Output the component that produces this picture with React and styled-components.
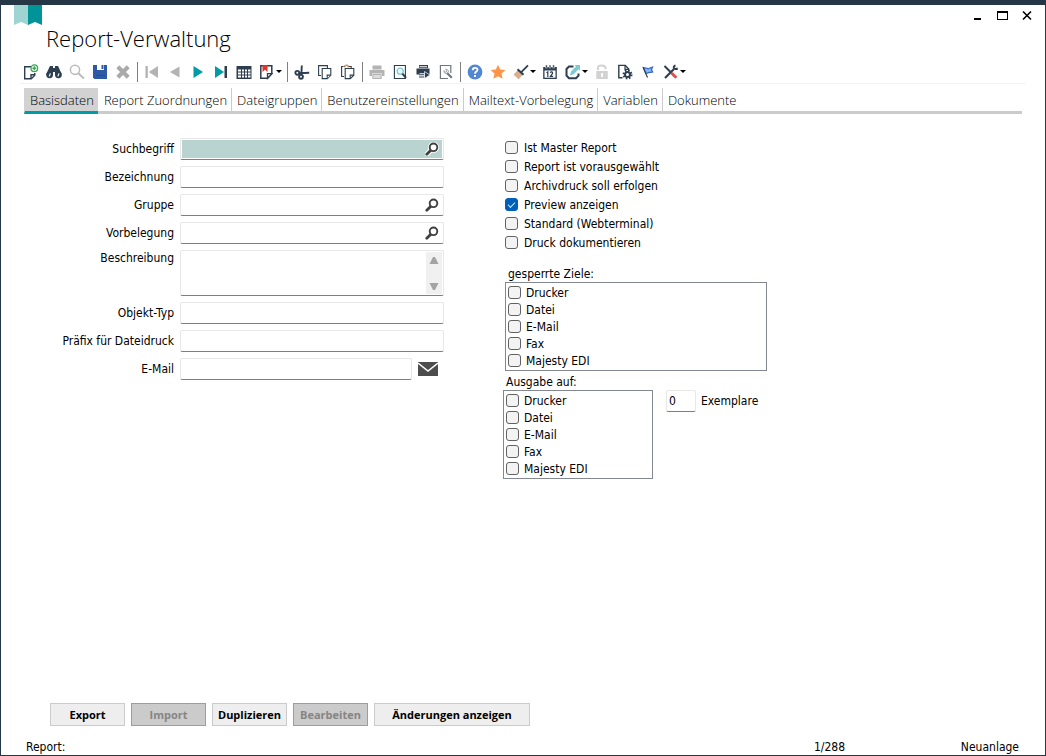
import React from 'react';
import styled, { createGlobalStyle } from 'styled-components';

const GlobalStyle = createGlobalStyle`
	* {
		box-sizing: border-box;
	}

	body {
		margin: 0;
		background: #fff;
		color: #000;
		font-family: 'DejaVu Sans Condensed', 'DejaVu Sans', sans-serif;
		font-size: 12px;
		line-height: 16px;
	}

	button,
	input,
	textarea {
		font: inherit;
		color: inherit;
	}
`;

const Window = styled.div`
	display: flex;
	flex-direction: column;
	min-height: 100vh;
	border: 1px solid #253746;
	border-top-width: 5px;
`;

const Header = styled.header`
	display: flex;
	align-items: flex-start;
	height: 54px;
	padding: 0 10px 0 13px;
`;

const Title = styled.h1`
	flex: 1;
	margin: 16px 0 0 4px;
	font-family: 'Open Sans', sans-serif;
	font-size: 22px;
	font-weight: 300;
	line-height: 34px;
`;

const WindowButtons = styled.div`
	display: flex;
	gap: 9px;
	padding-top: 3px;
`;

const IconButton = styled.button`
	display: flex;
	align-items: center;
	justify-content: center;
	width: 16px;
	height: 16px;
	padding: 0;
	border: none;
	background: none;
`;

const Toolbar = styled.div`
	display: flex;
	align-items: center;
	height: 25px;
	margin: 0 19px;
	padding-top: 2px;
	border-bottom: 1px solid #f3f3f3;
`;

const ToolButton = styled.button`
	display: flex;
	align-items: center;
	width: ${props => (props.$menu ? '29px' : '23px')};
	height: 22px;
	padding: 0 0 0 3px;
	border: none;
	background: none;
`;

const Separator = styled.span`
	width: 1px;
	height: 20px;
	margin: 0 3px 0 2px;
	background: #808080;
`;

const Tabs = styled.nav`
	display: flex;
	height: 30px;
	margin: 0 23px;
	padding-top: 4px;
	border-bottom: 3px solid #cbcbcb;
`;

const Tab = styled.a`
	height: ${props => (props.$active ? '26px' : '23px')};
	padding: 0 4px 0 5px;
	border-left: 1px solid ${props => (props.$line ? '#cbcbcb' : 'transparent')};
	border-bottom: ${props => (props.$active ? '3px solid #009ca6' : 'none')};
	background: ${props => (props.$active ? '#d2d2d2' : 'none')};
	color: #000;
	font-family: 'Open Sans', sans-serif;
	font-size: 13px;
	font-weight: 300;
	line-height: 24px;
	text-decoration: none;
	white-space: nowrap;
`;

const Content = styled.main`
	display: flex;
	flex: 1;
	align-items: flex-start;
	gap: 59px;
	padding: 24px 24px 20px 23px;
`;

const Form = styled.form`
	display: grid;
	grid-template-columns: 150px 264px;
	gap: 6px;
`;

const FieldLabel = styled.label`
	line-height: ${props => (props.$top ? '16px' : '22px')};
	text-align: right;
	white-space: nowrap;
`;

const Field = styled.div`
	display: flex;
	align-items: center;
	height: ${props => (props.$tall ? '46px' : '22px')};
	padding: 1px;
	border: 1px solid #e8e8e8;
	border-bottom-color: #7f7f7f;
	border-radius: 2px;
	background: ${props => (props.$active ? '#b9d4d0' : '#fff')};
	background-clip: content-box;
`;

const TextInput = styled.input`
	flex: 1;
	min-width: 0;
	height: 100%;
	padding: 0 1px;
	border: none;
	outline: none;
	background: none;
`;

const TextArea = styled.textarea`
	flex: 1;
	min-width: 0;
	height: 100%;
	padding: 2px;
	border: none;
	outline: none;
	background: none;
	resize: none;
`;

const ScrollBar = styled.div`
	display: flex;
	flex-direction: column;
	justify-content: space-between;
	height: 100%;
	background: #f0f0f0;
`;

const MailRow = styled.div`
	display: flex;
	align-items: center;
	gap: 6px;

	${Field} {
		width: 232px;
	}
`;

const LookupButton = styled(IconButton)`
	margin-right: 2px;
`;

const MailButton = styled(IconButton)`
	width: 20px;
`;

const Options = styled.section`
	flex: 1;
`;

const CheckList = styled.div`
	display: flex;
	flex-direction: column;
	padding-left: 2px;
`;

const CheckLabel = styled.label`
	display: flex;
	align-items: center;
	gap: ${props => (props.$dense ? '5px' : '6px')};
	height: ${props => (props.$dense ? '17px' : '19px')};
`;

const Checkbox = styled.input`
	appearance: none;
	position: relative;
	flex: none;
	width: 13px;
	height: 13px;
	margin: 0;
	border: 1px solid #626262;
	border-radius: 3px;
	background: #f3f3f3;

	&:checked {
		border-color: #005fb8;
		background: #005fb8;
	}

	&:checked::after {
		content: '';
		position: absolute;
		top: 3px;
		left: 2px;
		width: 6px;
		height: 3px;
		border: solid #d5e4f3;
		border-width: 0 0 1px 1px;
		transform: rotate(-45deg);
	}
`;

const Caption = styled.div`
	margin-top: ${props => (props.$spaced ? '14px' : '3px')};
	padding-left: ${props => (props.$spaced ? '5px' : '3px')};
	line-height: 16px;
`;

const ListBox = styled.div`
	width: ${props => (props.$wide ? '262px' : '150px')};
	margin-left: ${props => (props.$wide ? '2px' : '0')};
	padding: 1px 2px;
	border: 1px solid #828790;
`;

const OutputRow = styled.div`
	display: flex;
	align-items: flex-start;
`;

const Copies = styled.label`
	display: flex;
	align-items: center;
	gap: 5px;
	margin-left: 13px;

	${Field} {
		width: 30px;
	}
`;

const Actions = styled.div`
	display: flex;
	gap: 6px;
	padding: 0 49px;
`;

const ActionButton = styled.button`
	width: ${props => (props.$wide ? '156px' : '75px')};
	height: 23px;
	padding: 0;
	border: 1px solid #cbcbcb;
	background: #eee;
	font-family: 'Open Sans', sans-serif;
	font-size: 11px;
	font-weight: 700;

	&:disabled {
		border-color: #9d9d9d;
		background: #cbcbcb;
		color: #858585;
	}
`;

const StatusBar = styled.footer`
	display: grid;
	grid-template-columns: 1fr auto 174px;
	align-items: center;
	margin-top: 13px;
	padding: 0 26px 0 25px;

	span:last-child {
		text-align: right;
	}
`;

const DARK = '#2c3e50';
const TEAL = '#009ca6';
const GREY = '#b3b3b3';

const icons = {
	new: (
		<g fill="none" stroke={DARK} strokeWidth="1.4">
			<path d="M8 2.7H1.7v12h6.6l3.5-3.5V9" />
			<path d="M8 14.5v-3.7h4" />
			<circle cx="11.3" cy="4.2" r="3.3" fill="#fff" stroke="#36a852" strokeWidth="1.3" />
			<path d="M11.3 2.3v3.8M9.4 4.2h3.8" stroke="#36a852" />
		</g>
	),
	find: (
		<g fill={DARK}>
			<path d="M4 2h3v2h2V2h3l1 2 2.6 6-.6 1H9V8H7v3H.8L.3 10 3 4z" />
			<circle cx="3.6" cy="10.8" r="3.4" />
			<circle cx="12.4" cy="10.8" r="3.4" />
			<path d="M2.7 12.2l1.2-3 1.1.4-1.2 3zM11.3 12.2l1.2-3 1.1.4-1.2 3z" fill="#fff" />
		</g>
	),
	zoom: (
		<g fill="none" stroke="#bcbcbc">
			<circle cx="6" cy="5.8" r="4.6" strokeWidth="1.5" />
			<path d="M9.3 9.3l5.6 5.2" strokeWidth="2" />
		</g>
	),
	save: (
		<g>
			<path d="M1 1h14v14H2.5L1 13.5z" fill="#2d5aa5" />
			<path d="M5 1h7v5H5z" fill="#fff" />
			<path d="M9.5 1h2v4h-2z" fill="#2d5aa5" />
			<path d="M4 11h9v.8H4z" fill="#244a8b" />
		</g>
	),
	remove: <path d="M2.8 2.8l10.4 10.4M13.2 2.8L2.8 13.2" stroke="#aaa" strokeWidth="4.200" />,
	first: (
		<g fill={GREY}>
			<path d="M1.5 2h2.3v12H1.5zM14 2v12L4.8 8z" />
		</g>
	),
	prev: <path d="M12.5 2.5v11L3 8z" fill={GREY} />,
	next: <path d="M3.5 2v12L13 8z" fill={TEAL} />,
	last: (
		<g>
			<path d="M2 2v12l9-6z" fill={TEAL} />
			<path d="M11.5 2H14v12h-2.5z" fill={DARK} />
		</g>
	),
	table: (
		<g>
			<path d="M.5 2h15v13H.5z" fill={DARK} />
			<path
				d="M2 5.5h3v2H2zm4 0h2v2H6zm3 0h2v2H9zm3 0h2.5v2H12zM2 8.5h3v2H2zm4 0h2v2H6zm3 0h2v2H9zm3 0h2.5v2H12zM2 11.5h3v2H2zm4 0h2v2H6zm3 0h2v2H9zm3 0h2.5v2H12z"
				fill="#fff"
			/>
		</g>
	),
	bookmark: (
		<g>
			<path d="M1.8 1.7h11v8.1l-4.2 4.5H1.8z" fill="#fff" stroke={DARK} strokeWidth="1.5" />
			<path d="M8.5 14.3V9.7h4.3z" fill="#fff" stroke={DARK} strokeWidth="1.3" />
			<path d="M3.5 1h5v7L6 5.8 3.5 8z" fill="#e0352f" />
		</g>
	),
	cut: (
		<g fill="none" stroke={DARK} strokeWidth="1.9">
			<circle cx="3.3" cy="8.800" r="1.9" />
			<circle cx="7" cy="12.800" r="1.9" />
			<path d="M5.200 9.300l10-.5M7.300 11L7.800 1.500" />
		</g>
	),
	copy: (
		<g fill="#fff" stroke={DARK} strokeWidth="1.1">
			<path d="M4 11.5H1.6V1.6h8.8V4" />
			<path d="M5.2 4.5h8.6v6.7l-3.5 3.4H5.2z" />
			<path d="M10.2 14.5v-3.4h3.5" />
		</g>
	),
	paste: (
		<g fill="none" stroke={DARK} strokeWidth="1.1">
			<path d="M4 12.5H1.600V2.500h2M9 2.500h2.200V4" />
			<path d="M5.200 4.500h8.600v6.700l-3.500 3.400H5.200z" />
			<path d="M10.200 14.500v-3.400h3.500" />
			<path d="M4 2.400h1.500M7.500 2.400H9" stroke="#b0713c" strokeWidth="1.600" />
			<path d="M5.500 1.200h2.200" stroke="#777" />
		</g>
	),
	print: (
		<g fill={GREY}>
			<path d="M3.5 1.5h9v4h-9zM.5 6h15v6H13v-2.5H3V12H.5z" />
			<path d="M3.8 10.5h8.4v4H3.8z" fill="#ddd" stroke={GREY} />
		</g>
	),
	preview: (
		<g fill="none" stroke={DARK} strokeWidth="1.1">
			<path d="M2.4 1.5h11v13h-11z" />
			<circle cx="8.2" cy="7.2" r="3" fill="#e4fbfc" stroke="#80cbd3" strokeWidth="1.3" />
			<path d="M10.4 9.6l3.6 4.3" strokeWidth="2" />
		</g>
	),
	printGo: (
		<g fill={DARK}>
			<path d="M4 1h9v3H4zM1.500 4.500h13v6H1.500z" />
			<path d="M4.500 2.200h7.500v1H4.500zM4.500 8h6v4.500h-6z" fill="#fff" />
			<path d="M4 8h7v1.200H4zm0 2.200h5v1H4zm0 2.200h5v1H4z" />
			<path d="M9.500 7.500v7L15 11z" stroke="#fff" strokeWidth=".7" />
		</g>
	),
	pageTool: (
		<g fill="none" stroke="#6f777f" strokeWidth="1.200">
			<path d="M12.800 9V1.500H2.400v13H10" />
			<path d="M9 9l4.800 4.800" strokeWidth="2.200" />
			<path d="M7.500 5.200l1.600 1.600-1.400 1.500-1.800-1.600c-.3 2.200 1.600 3.300 3.200 2.600 1.800-.8 2.200-3.800-1.600-4.100z" stroke="#9a9fa4" strokeWidth="1" />
		</g>
	),
	help: (
		<g>
			<circle cx="8" cy="8" r="7.4" fill="#5086d3" />
			<path d="M5.7 6.2c0-3.2 4.8-3 4.8-.4C10.500 7.600 8 7.500 8 9.700" fill="none" stroke="#fff" strokeWidth="1.8" />
			<path d="M7 11h2v2H7z" fill="#fff" />
		</g>
	),
	star: <path d="M8 .8l2.200 4.700 5.200.600-3.900 3.500 1.100 5.200L8 12.200l-4.600 2.600 1.100-5.200L.6 6.100l5.200-.6z" fill="#ff9446" />,
	broom: (
		<g>
			<path d="M.5 10.500L5 6l5 4.600-4.500 4.600z" fill="#dcae8e" />
			<path d="M4.500 5.200l6 5.600" stroke={DARK} strokeWidth="2" />
			<path d="M8 8.300L15 1.300" stroke={DARK} strokeWidth="1.700" />
		</g>
	),
	calendar: (
		<g>
			<path d="M1.200 3h13.600v12H1.200z" fill={DARK} />
			<path d="M3.500 1h1.800v3H3.500zm3.600 0h1.800v3H7.100zm3.600 0h1.800v3h-1.800z" fill={DARK} stroke="#fff" strokeWidth=".5" />
			<path d="M2.500 6.500h11v7.200h-11z" fill="#fff" />
			<path d="M4.500 8.800l1.300-.9v5M8.300 8.700c.4-1.200 2.700-1 2.200.700L8.400 12.300h2.700" fill="none" stroke={DARK} strokeWidth="1.200" />
		</g>
	),
	edit: (
		<g>
			<path d="M8.500 2.500H4L1.500 5v6.500L4 14.200h7l2.500-2.500V9.500" fill="none" stroke={DARK} strokeWidth="2" />
			<path d="M5 11.500l1-4L11 2.600l-1.500-1.500H15v5.600l-1.500-1.500-4.700 5z" fill="#7fcad0" />
		</g>
	),
	unlock: (
		<g>
			<path d="M4 6V3.800C4 .7 10.800.7 11.500 3.800v1.500" fill="none" stroke="#d2d2d2" strokeWidth="2" />
			<path d="M2.300 7h11.500v8H2.300z" fill="#d2d2d2" />
			<path d="M7.200 9h1.800v4H7.200z" fill="#fff" />
		</g>
	),
	pageGear: (
		<g>
			<path d="M5.500 13.800H1.800V1.400h6.500L11.700 5v2" fill="none" stroke={DARK} strokeWidth="1.400" />
			<path d="M8 1.500V5.300h4" fill="none" stroke={DARK} strokeWidth="1.200" />
			<circle cx="10.500" cy="10.500" r="4" fill="none" stroke={DARK} strokeWidth="2" strokeDasharray="1.570 1.570" />
			<circle cx="10.500" cy="10.500" r="2.500" fill="#fff" stroke={DARK} strokeWidth="2" />
		</g>
	),
	flag: (
		<g>
			<path d="M3.500 3.500l4.600 1.200 4.400-1.600-1 2.700 1.200 2.300-4.200.500-2.600 1z" fill="#8bb3f4" stroke="#3467c5" strokeWidth="1.200" />
			<path d="M3 3.200l4.500 10.300" stroke={DARK} strokeWidth="1.200" />
		</g>
	),
	tools: (
		<g fill="none" stroke={DARK} strokeWidth="2">
			<path d="M2 14l9-9" strokeWidth="2.200" />
			<path d="M1.500 2l7 7" />
			<path d="M8.500 9l4.800 4.800" stroke="#d9534f" strokeWidth="3" />
			<path d="M12.500 1.500c-3 .8-2.300 4.800 2.300 3" strokeWidth="1.900" />
		</g>
	),
};

const tools = [
	['new', 'Neu'],
	['find', 'Suchen'],
	['zoom', 'Lupe'],
	['save', 'Speichern'],
	['remove', 'Löschen'],
	null,
	['first', 'Erster'],
	['prev', 'Zurück'],
	['next', 'Weiter'],
	['last', 'Letzter'],
	['table', 'Tabelle'],
	['bookmark', 'Lesezeichen', true],
	null,
	['cut', 'Ausschneiden'],
	['copy', 'Kopieren'],
	['paste', 'Einfügen'],
	null,
	['print', 'Drucken'],
	['preview', 'Vorschau'],
	['printGo', 'Direktdruck'],
	['pageTool', 'Druckoptionen'],
	null,
	['help', 'Hilfe'],
	['star', 'Favorit'],
	['broom', 'Bereinigen', true],
	['calendar', 'Kalender'],
	['edit', 'Bearbeiten', true],
	['unlock', 'Entsperren'],
	['pageGear', 'Einstellungen'],
	['flag', 'Markieren'],
	['tools', 'Werkzeuge', true],
];

const tabs = [
	'Basisdaten',
	'Report Zuordnungen',
	'Dateigruppen',
	'Benutzereinstellungen',
	'Mailtext-Vorbelegung',
	'Variablen',
	'Dokumente',
];

const options = [
	'Ist Master Report',
	'Report ist vorausgewählt',
	'Archivdruck soll erfolgen',
	'Preview anzeigen',
	'Standard (Webterminal)',
	'Druck dokumentieren',
];

const targets = ['Drucker', 'Datei', 'E-Mail', 'Fax', 'Majesty EDI'];

const Lookup = ({ label }) => (
	<LookupButton type="button" aria-label={label}>
		<svg width="14" height="14" viewBox="0 0 14 14">
			<path d="M1.800 12.300l4.500-4.500" stroke="#fff" strokeWidth="5" strokeLinecap="round" />
			<circle cx="8.500" cy="5.300" r="3.800" fill="#fff" stroke="#fff" strokeWidth="3.500" />
			<path d="M1.800 12.300l4.500-4.500" stroke="#404040" strokeWidth="2.800" strokeLinecap="round" />
			<circle cx="8.500" cy="5.300" r="3.800" fill="#fff" stroke="#404040" strokeWidth="1.900" />
		</svg>
	</LookupButton>
);

const Row = ({ id, label, active, lookup }) => (
	<>
		<FieldLabel htmlFor={id}>{label}</FieldLabel>
		<Field $active={active}>
			<TextInput id={id} type="text" />
			{lookup && <Lookup label={label + ' suchen'} />}
		</Field>
	</>
);

const Targets = ({ wide }) => (
	<ListBox $wide={wide}>
		{targets.map(name => (
			<CheckLabel key={name} $dense>
				<Checkbox type="checkbox" />
				{name}
			</CheckLabel>
		))}
	</ListBox>
);

const App = () => (
	<Window>
		<GlobalStyle />
		<Header>
			<svg width="28" height="20" viewBox="0 0 28 20">
				<path d="M0 0h14v20l-7-3-7 3z" fill="#9ed5d3" />
				<path d="M14 0h14v20l-7-3-7 3z" fill="#009499" />
			</svg>
			<Title>Report-Verwaltung</Title>
			<WindowButtons>
				<IconButton aria-label="Minimieren">
					<svg width="16" height="16" viewBox="0 0 16 16">
						<path d="M5 10h7v2H5z" />
					</svg>
				</IconButton>
				<IconButton aria-label="Maximieren">
					<svg width="16" height="16" viewBox="0 0 16 16">
						<path d="M3 3h11v9H3zM4 5v6h9V5z" fillRule="evenodd" />
					</svg>
				</IconButton>
				<IconButton aria-label="Schließen">
					<svg width="16" height="16" viewBox="0 0 16 16">
						<path d="M4 3.500l8 8M12 3.500l-8 8" stroke="#000" strokeWidth="1.600" />
					</svg>
				</IconButton>
			</WindowButtons>
		</Header>

		<Toolbar>
			{tools.map((tool, i) =>
				tool ? (
					<ToolButton key={tool[0]} aria-label={tool[1]} $menu={tool[2]}>
						<svg width="16" height="16" viewBox="0 0 16 16">
							{icons[tool[0]]}
						</svg>
						{tool[2] && (
							<svg width="7" height="4" viewBox="0 0 7 4">
								<path d="M1 0h6L4 3z" />
							</svg>
						)}
					</ToolButton>
				) : (
					<Separator key={i} />
				)
			)}
		</Toolbar>

		<Tabs>
			{tabs.map((name, i) => (
				<Tab key={name} href="#" $active={i === 0} $line={i > 1}>
					{name}
				</Tab>
			))}
		</Tabs>

		<Content>
			<Form>
				<Row id="suchbegriff" label="Suchbegriff" active lookup />
				<Row id="bezeichnung" label="Bezeichnung" />
				<Row id="gruppe" label="Gruppe" lookup />
				<Row id="vorbelegung" label="Vorbelegung" lookup />
				<FieldLabel htmlFor="beschreibung" $top>
					Beschreibung
				</FieldLabel>
				<Field $tall>
					<TextArea id="beschreibung" />
					<ScrollBar>
						<IconButton type="button" aria-label="Nach oben">
							<svg width="10" height="7" viewBox="0 0 10 7">
								<path d="M4 0h2l3.500 7H.5z" fill="#a3a3a3" />
							</svg>
						</IconButton>
						<IconButton type="button" aria-label="Nach unten">
							<svg width="10" height="7" viewBox="0 0 10 7">
								<path d="M.5 0h9L6 7H4z" fill="#a3a3a3" />
							</svg>
						</IconButton>
					</ScrollBar>
				</Field>
				<Row id="objekttyp" label="Objekt-Typ" />
				<Row id="praefix" label="Präfix für Dateidruck" />
				<FieldLabel htmlFor="email">E-Mail</FieldLabel>
				<MailRow>
					<Field>
						<TextInput id="email" type="text" />
					</Field>
					<MailButton type="button" aria-label="E-Mail senden">
						<svg width="20" height="14" viewBox="0 0 20 14">
							<path d="M0 0h20v14H0z" fill="#4d4d4d" />
							<path d="M0 1l10 8 10-8" fill="none" stroke="#fff" strokeWidth="1.500" />
						</svg>
					</MailButton>
				</MailRow>
			</Form>

			<Options>
				<CheckList>
					{options.map(name => (
						<CheckLabel key={name}>
							<Checkbox type="checkbox" defaultChecked={name === 'Preview anzeigen'} />
							{name}
						</CheckLabel>
					))}
				</CheckList>
				<Caption $spaced>gesperrte Ziele:</Caption>
				<Targets wide />
				<Caption>Ausgabe auf:</Caption>
				<OutputRow>
					<Targets />
					<Copies>
						<Field>
							<TextInput type="text" defaultValue="0" />
						</Field>
						Exemplare
					</Copies>
				</OutputRow>
			</Options>
		</Content>

		<Actions>
			<ActionButton>Export</ActionButton>
			<ActionButton disabled>Import</ActionButton>
			<ActionButton>Duplizieren</ActionButton>
			<ActionButton disabled>Bearbeiten</ActionButton>
			<ActionButton $wide>Änderungen anzeigen</ActionButton>
		</Actions>
		<StatusBar>
			<span>Report:</span>
			<span>1/288</span>
			<span>Neuanlage</span>
		</StatusBar>
	</Window>
);

export default App;
